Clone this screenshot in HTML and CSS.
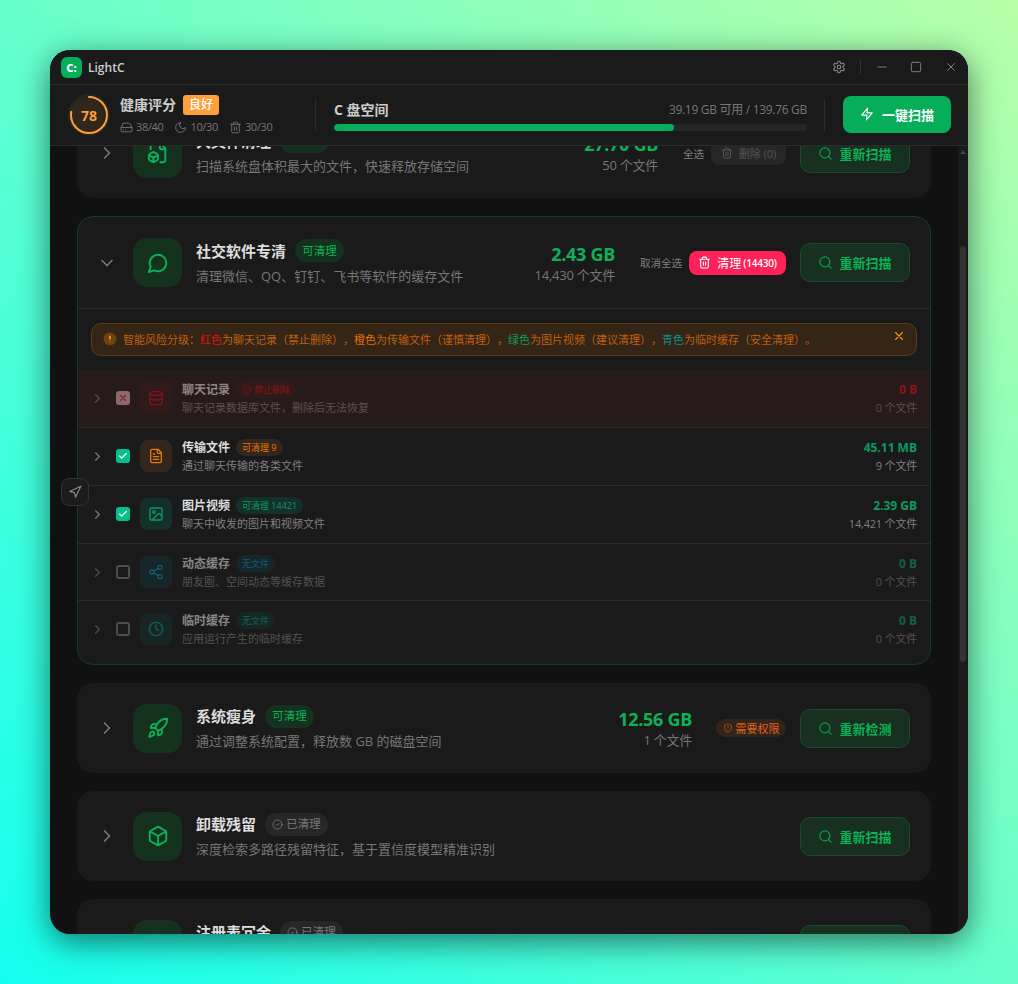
FILE: index.html
```html
<!DOCTYPE html>
<html lang="zh-CN">
<head>
  <meta charset="UTF-8" />
  <title>LightC</title>
  <link rel="stylesheet" href="styles.css">
</head>
<body>

  <!-- Iconos -->
  <svg class="sprite" width="0" height="0">
    <symbol id="i-right" viewBox="0 0 24 24"><path d="m9 18 6-6-6-6"/></symbol>
    <symbol id="i-down" viewBox="0 0 24 24"><path d="m6 9 6 6 6-6"/></symbol>
    <symbol id="i-chat" viewBox="0 0 24 24"><path d="M7.9 20A9 9 0 1 0 4 16.1L2 22Z"/></symbol>
    <symbol id="i-search" viewBox="0 0 24 24"><circle cx="11" cy="11" r="8"/><path d="m21 21-4.3-4.3"/></symbol>
    <symbol id="i-trash" viewBox="0 0 24 24"><path d="M3 6h18M19 6v14c0 1-1 2-2 2H7c-1 0-2-1-2-2V6M8 6V4c0-1 1-2 2-2h4c1 0 2 1 2 2v2M10 11v6M14 11v6"/></symbol>
    <symbol id="i-zap" viewBox="0 0 24 24"><path d="M13 2 3 14h9l-1 8 10-12h-9l1-8z"/></symbol>
    <symbol id="i-gear" viewBox="0 0 24 24"><path d="M12.22 2h-.44a2 2 0 0 0-2 2v.18a2 2 0 0 1-1 1.73l-.43.25a2 2 0 0 1-2 0l-.15-.08a2 2 0 0 0-2.73.73l-.22.38a2 2 0 0 0 .73 2.73l.15.1a2 2 0 0 1 1 1.72v.51a2 2 0 0 1-1 1.74l-.15.09a2 2 0 0 0-.73 2.73l.22.38a2 2 0 0 0 2.73.73l.15-.08a2 2 0 0 1 2 0l.43.25a2 2 0 0 1 1 1.73V20a2 2 0 0 0 2 2h.44a2 2 0 0 0 2-2v-.18a2 2 0 0 1 1-1.73l.43-.25a2 2 0 0 1 2 0l.15.08a2 2 0 0 0 2.73-.73l.22-.39a2 2 0 0 0-.73-2.73l-.15-.08a2 2 0 0 1-1-1.74v-.5a2 2 0 0 1 1-1.74l.15-.09a2 2 0 0 0 .73-2.73l-.22-.38a2 2 0 0 0-2.73-.73l-.15.08a2 2 0 0 1-2 0l-.43-.25a2 2 0 0 1-1-1.73V4a2 2 0 0 0-2-2z"/><circle cx="12" cy="12" r="3"/></symbol>
    <symbol id="i-box" viewBox="0 0 24 24"><path d="M21 16V8a2 2 0 0 0-1-1.73l-7-4a2 2 0 0 0-2 0l-7 4A2 2 0 0 0 3 8v8a2 2 0 0 0 1 1.73l7 4a2 2 0 0 0 2 0l7-4A2 2 0 0 0 21 16zM3.29 7 12 12l8.71-5M12 22V12"/></symbol>
    <symbol id="i-filebox" viewBox="0 0 24 24"><path d="M14.5 22H18a2 2 0 0 0 2-2V7l-5-5H6a2 2 0 0 0-2 2v4M14 2v4a2 2 0 0 0 2 2h4"/><path d="M3 13.1a2 2 0 0 0-1 1.76v3.24a2 2 0 0 0 .97 1.78L6 21.7a2 2 0 0 0 2.03.01L11 19.9a2 2 0 0 0 1-1.76V14.9a2 2 0 0 0-.97-1.78L8 11.3a2 2 0 0 0-2.03-.01ZM7 17v5M2.3 14.6 7 17l4.7-2.4"/></symbol>
    <symbol id="i-rocket" viewBox="0 0 24 24"><path d="M4.5 16.5c-1.5 1.26-2 5-2 5s3.74-.5 5-2c.71-.84.7-2.13-.09-2.91a2.18 2.18 0 0 0-2.91-.09zM12 15l-3-3a22 22 0 0 1 2-3.95A12.88 12.88 0 0 1 22 2c0 2.72-.78 7.5-6 11a22.35 22.35 0 0 1-4 2zM9 12H4s.55-3.03 2-4c1.62-1.08 5 0 5 0M12 15v5s3.03-.55 4-2c1.08-1.62 0-5 0-5"/></symbol>
    <symbol id="i-db" viewBox="0 0 24 24"><ellipse cx="12" cy="5" rx="9" ry="3"/><path d="M3 5v14a9 3 0 0 0 18 0V5M3 12a9 3 0 0 0 18 0"/></symbol>
    <symbol id="i-file" viewBox="0 0 24 24"><path d="M15 2H6a2 2 0 0 0-2 2v16a2 2 0 0 0 2 2h12a2 2 0 0 0 2-2V7ZM14 2v4a2 2 0 0 0 2 2h4M10 9H8M16 13H8M16 17H8"/></symbol>
    <symbol id="i-image" viewBox="0 0 24 24"><rect x="3" y="3" width="18" height="18" rx="2"/><circle cx="9" cy="9" r="2"/><path d="m21 15-3.086-3.086a2 2 0 0 0-2.828 0L6 21"/></symbol>
    <symbol id="i-share" viewBox="0 0 24 24"><circle cx="18" cy="5" r="3"/><circle cx="6" cy="12" r="3"/><circle cx="18" cy="19" r="3"/><path d="m8.59 13.51 6.83 3.98M15.41 6.51l-6.82 3.98"/></symbol>
    <symbol id="i-clock" viewBox="0 0 24 24"><circle cx="12" cy="12" r="10"/><path d="M12 6v6l4 2"/></symbol>
    <symbol id="i-nav" viewBox="0 0 24 24"><path d="M3 11 22 2l-9 19-2-8-8-2z"/></symbol>
    <symbol id="i-drive" viewBox="0 0 24 24"><path d="M22 12H2M5.45 5.11 2 12v6a2 2 0 0 0 2 2h16a2 2 0 0 0 2-2v-6l-3.45-6.89A2 2 0 0 0 16.76 4H7.24a2 2 0 0 0-1.79 1.11zM6 16h.01M10 16h.01"/></symbol>
    <symbol id="i-moon" viewBox="0 0 24 24"><path d="M12 3a6 6 0 0 0 9 9 9 9 0 1 1-9-9Z"/></symbol>
    <symbol id="i-shield" viewBox="0 0 24 24"><path d="M20 13c0 5-3.5 7.5-7.66 8.95a1 1 0 0 1-.67-.01C7.5 20.5 4 18 4 13V6a1 1 0 0 1 1-1c2 0 4.5-1.2 6.24-2.72a1.17 1.17 0 0 1 1.52 0C14.51 3.81 17 5 19 5a1 1 0 0 1 1 1zM12 8v4M12 16h.01"/></symbol>
    <symbol id="i-alert" viewBox="0 0 24 24"><circle cx="12" cy="12" r="10"/><path d="M12 8v4M12 16h.01"/></symbol>
    <symbol id="i-done" viewBox="0 0 24 24"><circle cx="12" cy="12" r="10"/><path d="m9 12 2 2 4-4"/></symbol>
    <symbol id="i-x" viewBox="0 0 24 24"><path d="M18 6 6 18M6 6l12 12"/></symbol>
    <symbol id="i-check" viewBox="0 0 24 24"><path d="M20 6 9 17l-5-5"/></symbol>
    <symbol id="i-min" viewBox="0 0 24 24"><path d="M5 12h14"/></symbol>
    <symbol id="i-max" viewBox="0 0 24 24"><rect x="4" y="4" width="16" height="16" rx="2"/></symbol>
  </svg>

  <div class="window">

    <!-- Barra de título -->
    <div class="titlebar">
      <div class="logo">C:</div>
      <div class="app-name">LightC</div>
      <div class="win-controls">
        <svg class="ic win-gear"><use href="#i-gear"/></svg>
        <div class="win-sep"></div>
        <svg class="ic win-btn"><use href="#i-min"/></svg>
        <svg class="ic win-btn"><use href="#i-max"/></svg>
        <svg class="ic win-btn"><use href="#i-x"/></svg>
      </div>
    </div>

    <!-- Cabecera -->
    <div class="topbar">
      <div class="health">
        <div class="ring">
          <svg viewBox="0 0 42 42" width="42" height="42">
            <circle class="ring-halo" cx="21" cy="21" r="20"/>
            <circle class="ring-val" cx="21" cy="21" r="18" pathLength="100" stroke-dasharray="78 22" transform="rotate(-90 21 21)"/>
          </svg>
          <span>78</span>
        </div>
        <div>
          <div class="health-title">健康评分 <span class="grade">良好</span></div>
          <div class="health-stats">
            <span><svg class="ic"><use href="#i-drive"/></svg>38/40</span>
            <span><svg class="ic"><use href="#i-moon"/></svg>10/30</span>
            <span><svg class="ic"><use href="#i-trash"/></svg>30/30</span>
          </div>
        </div>
      </div>
      <div class="vsep"></div>
      <div class="disk">
        <div class="disk-top">
          <div class="disk-name">C 盘空间</div>
          <div class="disk-free">39.19 GB 可用 / 139.76 GB</div>
        </div>
        <div class="bar"><div class="bar-fill" style="width: 71.9%"></div></div>
      </div>
      <div class="vsep"></div>
      <div class="scan-all"><svg class="ic"><use href="#i-zap"/></svg>一键扫描</div>
    </div>

    <div class="main">
      <div class="content">
        <div class="list">

          <!-- Archivos grandes -->
          <div class="card">
            <div class="card-head">
              <svg class="ic chev"><use href="#i-right"/></svg>
              <div class="card-icon"><svg class="ic"><use href="#i-filebox"/></svg></div>
              <div class="card-info">
                <div class="card-title">大文件清理 <span class="tag">可清理</span></div>
                <div class="card-desc">扫描系统盘体积最大的文件，快速释放存储空间</div>
              </div>
              <div class="card-stat">
                <div class="size">27.70 GB</div>
                <div class="count">50 个文件</div>
              </div>
              <div class="actions">
                <span class="select-all">全选</span>
                <span class="btn-delete"><svg class="ic"><use href="#i-trash"/></svg>删除 (0)</span>
              </div>
              <div class="btn-scan"><svg class="ic"><use href="#i-search"/></svg>重新扫描</div>
            </div>
          </div>

          <!-- Redes sociales, abierta -->
          <div class="card open">
            <div class="card-head head-line">
              <svg class="ic chev"><use href="#i-down"/></svg>
              <div class="card-icon"><svg class="ic"><use href="#i-chat"/></svg></div>
              <div class="card-info">
                <div class="card-title">社交软件专清 <span class="tag">可清理</span></div>
                <div class="card-desc">清理微信、QQ、钉钉、飞书等软件的缓存文件</div>
              </div>
              <div class="card-stat">
                <div class="size">2.43 GB</div>
                <div class="count">14,430 个文件</div>
              </div>
              <div class="actions">
                <span class="select-all">取消全选</span>
                <span class="btn-clean"><svg class="ic"><use href="#i-trash"/></svg>清理 <b>(14430)</b></span>
              </div>
              <div class="btn-scan"><svg class="ic"><use href="#i-search"/></svg>重新扫描</div>
            </div>

            <div class="notice">
              <svg class="notice-icon" viewBox="0 0 24 24"><circle cx="12" cy="12" r="11"/><path d="M12 6.500v6.500M12 16.500v1"/></svg>
              <div class="notice-text">智能风险分级：<span class="red">红色</span>为聊天记录（禁止删除），<span class="orange">橙色</span>为传输文件（谨慎清理），<span class="green">绿色</span>为图片视频（建议清理），<span class="cyan">青色</span>为临时缓存（安全清理）。</div>
              <svg class="ic notice-close"><use href="#i-x"/></svg>
            </div>

            <div class="rows">
              <div class="row row-danger">
                <div class="dim row-main">
                  <svg class="ic row-chev"><use href="#i-right"/></svg>
                  <div class="check check-x"><svg class="ic"><use href="#i-x"/></svg></div>
                  <div class="row-icon c-red"><svg class="ic"><use href="#i-db"/></svg></div>
                  <div class="row-info">
                    <div class="row-title">聊天记录 <span class="row-tag c-red"><svg class="ic"><use href="#i-alert"/></svg>禁止删除</span></div>
                    <div class="row-desc">聊天记录数据库文件，删除后无法恢复</div>
                  </div>
                  <div class="row-stat">
                    <div class="row-size t-red">0 B</div>
                    <div class="row-count">0 个文件</div>
                  </div>
                </div>
              </div>
              <div class="row">
                <div class="row-main">
                  <svg class="ic row-chev"><use href="#i-right"/></svg>
                  <div class="check check-on"><svg class="ic"><use href="#i-check"/></svg></div>
                  <div class="row-icon c-orange"><svg class="ic"><use href="#i-file"/></svg></div>
                  <div class="row-info">
                    <div class="row-title">传输文件 <span class="row-tag c-orange">可清理 9</span></div>
                    <div class="row-desc">通过聊天传输的各类文件</div>
                  </div>
                  <div class="row-stat">
                    <div class="row-size">45.11 MB</div>
                    <div class="row-count">9 个文件</div>
                  </div>
                </div>
              </div>
              <div class="row">
                <div class="row-main">
                  <svg class="ic row-chev"><use href="#i-right"/></svg>
                  <div class="check check-on"><svg class="ic"><use href="#i-check"/></svg></div>
                  <div class="row-icon c-green"><svg class="ic"><use href="#i-image"/></svg></div>
                  <div class="row-info">
                    <div class="row-title">图片视频 <span class="row-tag c-green">可清理 14421</span></div>
                    <div class="row-desc">聊天中收发的图片和视频文件</div>
                  </div>
                  <div class="row-stat">
                    <div class="row-size">2.39 GB</div>
                    <div class="row-count">14,421 个文件</div>
                  </div>
                </div>
              </div>
              <div class="row">
                <div class="dim row-main">
                  <svg class="ic row-chev"><use href="#i-right"/></svg>
                  <div class="check"></div>
                  <div class="row-icon c-blue"><svg class="ic"><use href="#i-share"/></svg></div>
                  <div class="row-info">
                    <div class="row-title">动态缓存 <span class="row-tag c-blue">无文件</span></div>
                    <div class="row-desc">朋友圈、空间动态等缓存数据</div>
                  </div>
                  <div class="row-stat">
                    <div class="row-size">0 B</div>
                    <div class="row-count">0 个文件</div>
                  </div>
                </div>
              </div>
              <div class="row">
                <div class="dim row-main">
                  <svg class="ic row-chev"><use href="#i-right"/></svg>
                  <div class="check"></div>
                  <div class="row-icon c-teal"><svg class="ic"><use href="#i-clock"/></svg></div>
                  <div class="row-info">
                    <div class="row-title">临时缓存 <span class="row-tag c-teal">无文件</span></div>
                    <div class="row-desc">应用运行产生的临时缓存</div>
                  </div>
                  <div class="row-stat">
                    <div class="row-size">0 B</div>
                    <div class="row-count">0 个文件</div>
                  </div>
                </div>
              </div>
            </div>
          </div>

          <!-- Sistema -->
          <div class="card">
            <div class="card-head">
              <svg class="ic chev"><use href="#i-right"/></svg>
              <div class="card-icon"><svg class="ic"><use href="#i-rocket"/></svg></div>
              <div class="card-info">
                <div class="card-title">系统瘦身 <span class="tag">可清理</span></div>
                <div class="card-desc">通过调整系统配置，释放数 GB 的磁盘空间</div>
              </div>
              <div class="card-stat">
                <div class="size">12.56 GB</div>
                <div class="count">1 个文件</div>
              </div>
              <div class="actions">
                <span class="perm"><svg class="ic"><use href="#i-shield"/></svg>需要权限</span>
              </div>
              <div class="btn-scan"><svg class="ic"><use href="#i-search"/></svg>重新检测</div>
            </div>
          </div>

          <div class="card">
            <div class="card-head">
              <svg class="ic chev"><use href="#i-right"/></svg>
              <div class="card-icon"><svg class="ic"><use href="#i-box"/></svg></div>
              <div class="card-info">
                <div class="card-title">卸载残留 <span class="tag tag-done"><svg class="ic"><use href="#i-done"/></svg>已清理</span></div>
                <div class="card-desc">深度检索多路径残留特征，基于置信度模型精准识别</div>
              </div>
              <div class="btn-scan"><svg class="ic"><use href="#i-search"/></svg>重新扫描</div>
            </div>
          </div>

          <div class="card">
            <div class="card-head">
              <svg class="ic chev"><use href="#i-right"/></svg>
              <div class="card-icon"><svg class="ic"><use href="#i-box"/></svg></div>
              <div class="card-info">
                <div class="card-title">注册表冗余 <span class="tag tag-done"><svg class="ic"><use href="#i-done"/></svg>已清理</span></div>
                <div class="card-desc">清理无效的注册表项</div>
              </div>
              <div class="btn-scan"><svg class="ic"><use href="#i-search"/></svg>重新扫描</div>
            </div>
          </div>

        </div>
      </div>

      <div class="scrollbar">
        <div class="scroll-arrow"></div>
        <div class="scroll-thumb"></div>
      </div>

      <!-- Botón flotante -->
      <div class="float-btn"><svg class="ic"><use href="#i-nav"/></svg></div>
    </div>
  </div>

</body>
</html>
```

FILE: styles.css
```css
* {
  box-sizing: border-box;
}

html, body {
  height: 984px;
}

body {
  margin: 0;
  padding: 50px;
  overflow: hidden;
  font-family: "Open Sans", "Noto Sans CJK SC", sans-serif;
  text-spacing-trim: space-all;
  background: linear-gradient(to top right, #14fff0, #b8ffa8);
}

.sprite {
  position: absolute;
}

.ic {
  width: 14px;
  height: 14px;
  flex: none;
  fill: none;
  stroke: currentColor;
  stroke-width: 2;
  stroke-linecap: round;
  stroke-linejoin: round;
}

.window {
  width: 918px;
  height: 884px;
  border-radius: 20px;
  overflow: hidden;
  display: flex;
  flex-direction: column;
  background: #111;
  box-shadow: 0 8px 32px rgba(0, 0, 0, 0.55);
}

/* Barra de título */
.titlebar {
  height: 35px;
  flex: none;
  display: flex;
  align-items: center;
  padding: 0 11px;
  background: #1a1a1a;
  border-bottom: 1px solid #2c2c2c;
}

.logo {
  width: 21px;
  height: 21px;
  border-radius: 6px;
  background: #07ae5a;
  color: #fff;
  font-size: 11px;
  font-weight: 800;
  line-height: 21px;
  text-align: center;
}

.app-name {
  margin-left: 6px;
  font-size: 12px;
  font-weight: 600;
  color: #ccc;
}

.win-controls {
  margin-left: auto;
  display: flex;
  align-items: center;
  color: #8a8a8a;
}

.win-gear {
  width: 14px;
  height: 14px;
  stroke-width: 1.8;
}

.win-sep {
  width: 1px;
  height: 14px;
  margin: 0 14px;
  background: #333;
}

.win-btn {
  width: 14px;
  height: 14px;
  stroke-width: 1.5;
  margin-right: 20px;
}

.win-btn:last-child {
  margin-left: 1px;
  margin-right: -1px;
}

/* Cabecera */
.topbar {
  height: 61px;
  flex: none;
  display: flex;
  align-items: center;
  padding: 0 17px 0 18px;
  background: #1a1a1a;
  border-bottom: 1px solid #2c2c2c;
}

.health {
  width: 247px;
  display: flex;
  align-items: center;
  gap: 10px;
}

.ring {
  width: 42px;
  height: 42px;
  position: relative;
  display: flex;
  align-items: center;
  justify-content: center;
}

.ring svg {
  position: absolute;
  inset: 0;
}

.ring circle {
  fill: none;
  stroke-width: 2;
}

.ring .ring-halo {
  fill: #30261a;
  stroke: #252525;
}

.ring .ring-val {
  stroke: #ff9f3a;
  stroke-linecap: round;
}

.ring span {
  position: relative;
  font-size: 14px;
  font-weight: 700;
  color: #ff9f3a;
}

.health-title {
  display: flex;
  align-items: center;
  gap: 7px;
  font-size: 14px;
  line-height: 20px;
  font-weight: 700;
  color: #ccc;
}

.grade {
  height: 20px;
  padding: 0 6px;
  border-radius: 3px;
  background: #ff9f3a;
  color: #fff;
  font-size: 12px;
  font-weight: 500;
  line-height: 20px;
}

.health-stats {
  margin-top: 4px;
  display: flex;
  gap: 11px;
  font-size: 11px;
  line-height: 16px;
  letter-spacing: -0.35px;
  color: #777;
}

.health-stats span {
  display: flex;
  align-items: center;
  gap: 3px;
}

.health-stats .ic {
  width: 13px;
  height: 13px;
  stroke-width: 1.7;
}

.vsep {
  width: 1px;
  height: 32px;
  flex: none;
  background: #2c2c2c;
}

.disk {
  flex: 1;
  margin: 0 17px 0 18px;
}

.disk-top {
  display: flex;
  justify-content: space-between;
  align-items: center;
  height: 20px;
}

.disk-name {
  font-size: 14px;
  font-weight: 700;
  color: #ccc;
}

.disk-free {
  font-size: 12px;
  letter-spacing: -0.3px;
  color: #777;
}

.bar {
  margin-top: 5px;
  height: 7px;
  border-radius: 4px;
  background: #262626;
  overflow: hidden;
}

.bar-fill {
  height: 100%;
  border-radius: 4px;
  background: #07ae5a;
}

.scan-all {
  margin-left: 18px;
  margin-bottom: 2px;
  width: 108px;
  height: 37px;
  border-radius: 8px;
  display: flex;
  align-items: center;
  justify-content: center;
  gap: 8px;
  background: #07ae5a;
  color: #fff;
  font-size: 13px;
  font-weight: 700;
}

/* Contenido */
.main {
  flex: 1;
  min-height: 0;
  position: relative;
  display: flex;
}

.content {
  flex: 1;
  overflow: hidden;
  padding: 0 27px;
}

/* La lista está desplazada, como si se hubiera hecho scroll */
.list {
  margin-top: -38px;
  display: flex;
  flex-direction: column;
  gap: 18px;
}

.card {
  flex: none;
  border: 1px solid #1a1a1a;
  border-radius: 16px;
  background: #1a1a1a;
}

.card.open {
  border-color: #163d2a;
}

.card-head {
  height: 88.2px;
  display: flex;
  align-items: center;
  padding: 0 20px 0 19px;
}

.head-line {
  height: 91.8px;
  border-bottom: 1px solid #2a2a2a;
}

.chev {
  width: 20px;
  height: 20px;
  color: #777;
  stroke-width: 2;
}

.card-icon {
  width: 49px;
  height: 49px;
  margin-left: 16px;
  border-radius: 14px;
  display: flex;
  align-items: center;
  justify-content: center;
  background: #15321f;
  color: #0cb159;
}

.card-icon .ic {
  width: 22px;
  height: 22px;
  stroke-width: 2.1;
}

.card-info {
  flex: 1;
  margin-left: 14px;
  padding-bottom: 2px;
}

.card-title {
  display: flex;
  align-items: center;
  gap: 4px;
  font-size: 15px;
  line-height: 24px;
  font-weight: 700;
  color: #ddd;
}

.tag {
  height: 23px;
  margin-left: 5px;
  padding: 0 7.25px;
  border-radius: 12px;
  display: flex;
  align-items: center;
  gap: 3px;
  background: #15321f;
  color: #0cb159;
  font-size: 11.5px;
  font-weight: 400;
}

.tag-done {
  background: #272727;
  color: #777;
}

.tag-done .ic {
  width: 11px;
  height: 11px;
}

.card-desc {
  margin-top: 4px;
  font-size: 13px;
  line-height: 18px;
  color: #777;
}

.card-stat {
  text-align: right;
  margin-right: 24px;
}

.size {
  font-size: 18px;
  line-height: 24px;
  font-weight: 700;
  letter-spacing: -0.3px;
  color: #0cb159;
}

.count {
  margin-top: 1px;
  font-size: 13px;
  line-height: 17px;
  letter-spacing: -0.25px;
  color: #777;
}

.actions {
  display: flex;
  align-items: center;
  gap: 7px;
  margin-right: 14px;
}

.select-all {
  margin-left: 1px;
  font-size: 10.5px;
  color: #808080;
}

.btn-delete {
  width: 75px;
  height: 24px;
  border-radius: 8px;
  display: flex;
  align-items: center;
  justify-content: center;
  gap: 6px;
  background: #272727;
  color: #555;
  font-size: 11px;
}

.btn-delete .ic {
  width: 12px;
  height: 12px;
}

.btn-clean {
  width: 97px;
  height: 24px;
  border-radius: 8px;
  display: flex;
  align-items: center;
  justify-content: center;
  gap: 6px;
  background: #ff2157;
  color: #fff;
  font-size: 12px;
}

.btn-clean .ic {
  width: 13px;
  height: 13px;
}

.btn-clean b {
  font-size: 10px;
  font-weight: 600;
  letter-spacing: -0.2px;
  margin-left: -4px;
}

.perm {
  width: 70px;
  height: 18px;
  border-radius: 9px;
  display: flex;
  align-items: center;
  justify-content: center;
  gap: 3px;
  background: #33241a;
  color: #e0641a;
  font-size: 11px;
}

.perm .ic {
  width: 10px;
  height: 10px;
  color: #a85c10;
}

.btn-scan {
  width: 110px;
  height: 39px;
  border-radius: 10px;
  display: flex;
  align-items: center;
  justify-content: center;
  gap: 6px;
  border: 1px solid #1b4a2f;
  background: #17301f;
  color: #0cb159;
  font-size: 13px;
  font-weight: 700;
}

.btn-scan .ic {
  width: 15px;
  height: 15px;
  color: #0c9a50;
}

/* Aviso */
.notice {
  margin: 14px 13px;
  height: 33px;
  padding: 0 10px 0 11px;
  border: 1px solid #5c3d12;
  border-radius: 10px;
  display: flex;
  align-items: center;
  background: #342516;
}

.notice-icon {
  width: 14px;
  height: 14px;
  flex: none;
}

.notice-icon circle {
  fill: #6b4310;
}

.notice-icon path {
  fill: none;
  stroke: #ff8a14;
  stroke-width: 3;
}

.notice-text {
  flex: 1;
  margin-left: 6px;
  font-size: 11px;
  color: #c2600f;
}

.notice-text .red {
  color: #e01010;
}

.notice-text .orange {
  color: #e86f00;
}

.notice-text .green {
  color: #0c9a60;
}

.notice-text .cyan {
  color: #0d8f8f;
}

.notice-close {
  width: 14px;
  height: 14px;
  margin-top: -6px;
  color: #e8961a;
}

/* Filas */
.row {
  height: 58px;
  border-bottom: 1px solid #2a2a2a;
}

.row:nth-child(4) {
  height: 57px;
}

.row:last-child {
  border-bottom: 0;
  height: 63px;
}

.row-danger {
  background: #261a1b;
}

.row-main {
  height: 57px;
  display: flex;
  align-items: center;
  padding: 0 13px 0 12px;
}

.dim {
  opacity: 0.55;
}

.row-chev {
  width: 15px;
  height: 15px;
  color: #777;
}

.check {
  width: 14px;
  height: 14px;
  margin-left: 11px;
  border: 2px solid #777;
  border-radius: 3px;
  display: flex;
  align-items: center;
  justify-content: center;
}

.check .ic {
  width: 10px;
  height: 10px;
  stroke-width: 3;
}

.check-on {
  border: 0;
  background: #05c08a;
  color: #fff;
}

.check-x {
  border: 0;
  background: #e0a8b0;
  color: #b83040;
}

.row-icon {
  width: 32px;
  height: 32px;
  margin-left: 10px;
  border-radius: 8px;
  display: flex;
  align-items: center;
  justify-content: center;
}

.row-icon .ic {
  width: 16px;
  height: 16px;
}

.c-red {
  background: #3a1a1a;
  color: #d0101a;
}

.c-orange {
  background: #33261a;
  color: #e8780a;
}

.c-green {
  background: #15302a;
  color: #0c9a60;
}

.c-blue {
  background: #16303a;
  color: #0e8fb0;
}

.c-teal {
  background: #15302e;
  color: #0e9a8a;
}

.row-info {
  flex: 1;
  margin-left: 10px;
}

.row-title {
  display: flex;
  align-items: center;
  gap: 3px;
  font-size: 12px;
  line-height: 18px;
  font-weight: 700;
  color: #ddd;
}

.row-tag {
  height: 17px;
  margin-left: 3px;
  padding: 0 6px;
  border-radius: 9px;
  display: flex;
  align-items: center;
  gap: 3px;
  font-size: 9px;
  font-weight: 400;
}

.row-tag .ic {
  width: 9px;
  height: 9px;
}

.row-desc {
  margin-top: 1px;
  font-size: 11px;
  line-height: 16px;
  color: #808080;
}

.row-stat {
  text-align: right;
}

.row-size {
  font-size: 12px;
  line-height: 18px;
  font-weight: 700;
  color: #0c9a60;
}

.row-size.t-red {
  color: #e01010;
}

.row-count {
  margin-top: 1px;
  font-size: 11px;
  line-height: 16px;
  letter-spacing: -0.2px;
  color: #808080;
}

/* Barra de scroll */
.scrollbar {
  width: 10px;
  flex: none;
  background: #1a1a1a;
  padding: 0 2px;
}

.scroll-arrow {
  margin: 4px auto 0;
  width: 0;
  height: 0;
  border-left: 3px solid transparent;
  border-right: 3px solid transparent;
  border-bottom: 4px solid #444;
}

.scroll-thumb {
  margin-top: 92px;
  height: 416px;
  border-radius: 3px;
  background: #333;
}

.float-btn {
  position: absolute;
  left: 11px;
  top: 332px;
  width: 28px;
  height: 28px;
  border: 1px solid #333;
  border-radius: 8px;
  display: flex;
  align-items: center;
  justify-content: center;
  background: #1c1c1c;
  color: #888;
}
```
